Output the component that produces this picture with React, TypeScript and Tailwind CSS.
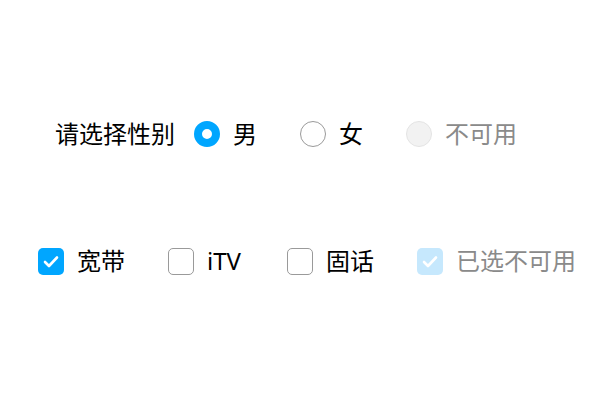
import { useState } from "react";

type Opt = { label: string; disabled?: boolean };

const genders: Opt[] = [{ label: "男" }, { label: "女" }, { label: "不可用", disabled: true }];
const services: Opt[] = [{ label: "宽带" }, { label: "iTV" }, { label: "固话" }, { label: "已选不可用", disabled: true }];

function Radio({ opt, checked, onPick }: { opt: Opt; checked: boolean; onPick: () => void }) {
  let circle = "border border-[#9a9a9a] bg-white";
  if (checked) circle = "border-[8px] border-[#00a6ff] bg-white";
  if (opt.disabled) circle = "border border-[#e4e4e4] bg-[#f2f2f2]";
  return (
    <button
      type="button"
      disabled={opt.disabled}
      onClick={onPick}
      className="flex items-center gap-[13px]"
    >
      <span className={`box-border block h-[26px] w-[26px] rounded-full ${circle}`} />
      <span className={opt.disabled ? "text-[#8a8a8a]" : "text-black"}>{opt.label}</span>
    </button>
  );
}

function Checkbox({ opt, checked, onToggle }: { opt: Opt; checked: boolean; onToggle: () => void }) {
  let box = "border border-[#9a9a9a] bg-white";
  if (checked) box = "bg-[#00a6ff]";
  if (opt.disabled) box = "bg-[#c6e8fd]";
  return (
    <button
      type="button"
      disabled={opt.disabled}
      onClick={onToggle}
      className="flex items-center gap-[13px]"
    >
      <span className={`box-border flex h-[27px] w-[26px] items-center justify-center rounded-[5px] ${box}`}>
        {(checked || opt.disabled) && (
          <svg width="26" height="27" viewBox="0 0 26 26" fill="none">
            <path d="M7 13.5l4 4 8-8.5" stroke="white" strokeWidth="2.6" strokeLinecap="round" strokeLinejoin="round" />
          </svg>
        )}
      </span>
      <span className={`min-w-[37px] text-left ${opt.disabled ? "text-[#8a8a8a]" : "text-black"}`}>{opt.label}</span>
    </button>
  );
}

export default function App() {
  const [gender, setGender] = useState("男");
  const [picked, setPicked] = useState<string[]>(["宽带"]);

  const toggle = (label: string) =>
    setPicked((prev) => (prev.includes(label) ? prev.filter((l) => l !== label) : [...prev, label]));

  return (
    <div
      className="flex h-[400px] w-[600px] flex-col bg-white pt-[118px] text-[24px] leading-[32px]"
      style={{ fontFamily: '"Noto Sans", "Noto Sans CJK SC", sans-serif' }}
    >
      <div className="flex items-center pl-[55px]">
        <span className="mr-[19px] text-black">请选择性别</span>
        <div className="flex items-center gap-[43px]">
          {genders.map((g) => (
            <Radio key={g.label} opt={g} checked={gender === g.label} onPick={() => setGender(g.label)} />
          ))}
        </div>
      </div>

      <div className="mt-[95px] flex items-center gap-[43px] pl-[38px]">
        {services.map((s) => (
          <Checkbox key={s.label} opt={s} checked={picked.includes(s.label)} onToggle={() => toggle(s.label)} />
        ))}
      </div>
    </div>
  );
}
